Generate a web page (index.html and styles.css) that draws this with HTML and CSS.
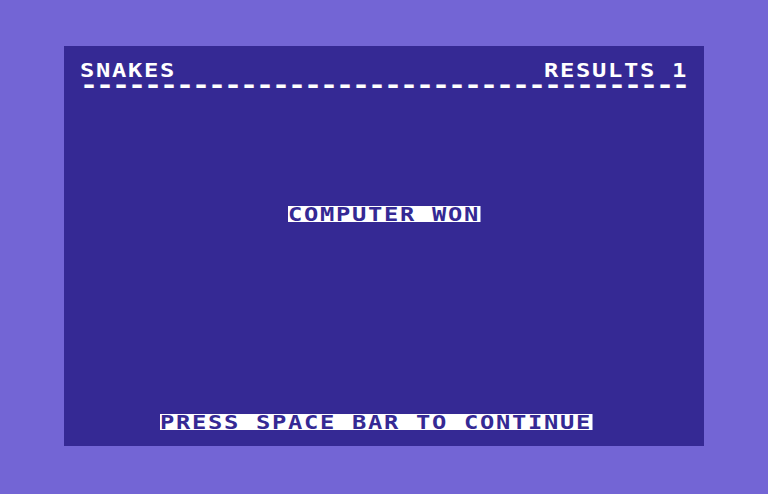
FILE: index.html
```html
<!DOCTYPE html>
<html lang="en">
<head>
<meta charset="utf-8">
<title>Snakes</title>
<link rel="stylesheet" href="styles.css">
</head>
<body>
<div class="border">
  <div class="screen">
    <div class="cell title"><span class="txt">SNAKES</span></div>
    <div class="cell results"><span class="txt">RESULTS 1</span></div>
    <div class="cell rule"><span class="txt dashes">--------------------------------------</span></div>
    <div class="cell verdict"><span class="txt rev">COMPUTER WON</span></div>
    <div class="cell prompt"><span class="txt rev">PRESS SPACE BAR TO CONTINUE</span></div>
  </div>
</div>
</body>
</html>
```
FILE: styles.css
```css
html, body {
  margin: 0;
  padding: 0;
}

body {
  background: #7365d5;
  width: 768px;
  height: 494px;
  overflow: hidden;
}

.border {
  display: flex;
  justify-content: center;
  padding-top: 46px;
}

/* 40 x 25 character screen, 16px cells */
.screen {
  background: #352994;
  width: 640px;
  height: 400px;
  display: grid;
  grid-template-columns: repeat(40, 16px);
  grid-template-rows: repeat(25, 16px);
}

.cell {
  height: 16px;
  white-space: pre;
}

/* monospace glyphs stretched to fill a 16px cell */
.txt {
  display: inline-block;
  font-family: "DejaVu Sans Mono", monospace;
  font-weight: bold;
  font-size: 19px;
  line-height: 16px;
  height: 16px;
  letter-spacing: 1.36px;
  color: #ffffff;
  transform: scaleX(1.25);
  transform-origin: left top;
}

/* wider minus signs for the underline row */
.dashes {
  font-size: 24px;
  letter-spacing: -1.65px;
  transform: translate(0, -1px) scaleX(1.25);
}

.rev {
  background: #ffffff;
  color: #352994;
}

.title   { grid-row: 2;  grid-column: 2 / span 6; }
.results { grid-row: 2;  grid-column: 31 / span 9; }
.rule    { grid-row: 3;  grid-column: 2 / span 38; }
.verdict { grid-row: 11; grid-column: 15 / span 12; }
.prompt  { grid-row: 24; grid-column: 7 / span 27; }
```
